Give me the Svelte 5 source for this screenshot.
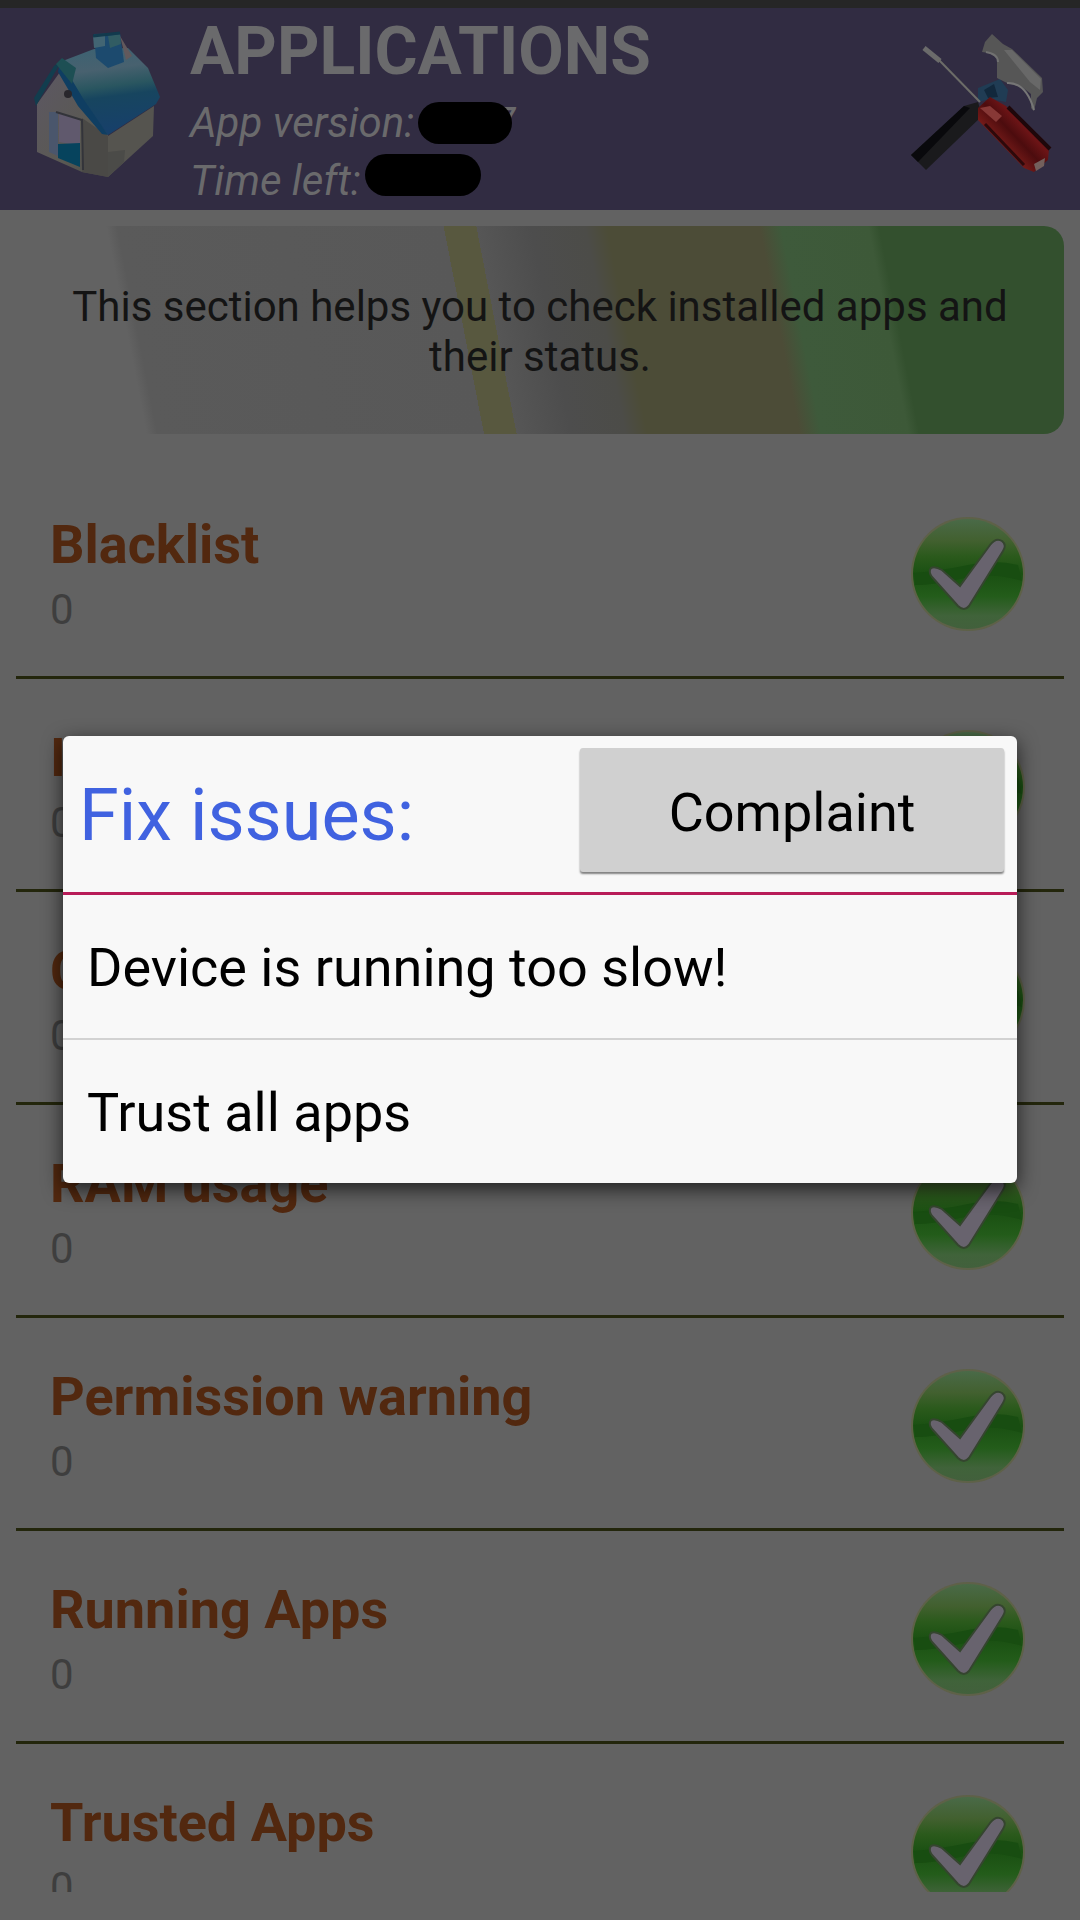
<script>
  const rows = ['Blacklist', 'Issues', 'Cache', 'RAM usage', 'Permission warning', 'Running Apps', 'Trusted Apps'];
  const fixes = ['Device is running too slow!', 'Trust all apps'];
</script>

<svg class="defs" width="0" height="0" aria-hidden="true">
  <defs>
    <linearGradient id="ball" x1="0" y1="0" x2="0" y2="1">
      <stop offset="0" stop-color="#4a6a48" />
      <stop offset="0.2" stop-color="#42602f" />
      <stop offset="0.34" stop-color="#2b5a1c" />
      <stop offset="0.5" stop-color="#1a5012" />
      <stop offset="0.7" stop-color="#235c1a" />
      <stop offset="0.88" stop-color="#40633a" />
      <stop offset="1" stop-color="#42603c" />
    </linearGradient>
    <linearGradient id="roof" x1="0" y1="0" x2="0.15" y2="1">
      <stop offset="0" stop-color="#3b6272" />
      <stop offset="0.3" stop-color="#48616f" />
      <stop offset="0.5" stop-color="#2a5660" />
      <stop offset="0.62" stop-color="#17455f" />
      <stop offset="1" stop-color="#17406a" />
    </linearGradient>
    <linearGradient id="wall" x1="0" y1="0" x2="1" y2="1">
      <stop offset="0" stop-color="#5c5763" />
      <stop offset="0.6" stop-color="#5a5953" />
      <stop offset="1" stop-color="#4a4a47" />
    </linearGradient>
    <linearGradient id="grip" x1="0" y1="1" x2="1" y2="0">
      <stop offset="0" stop-color="#5c1514" />
      <stop offset="0.35" stop-color="#741a18" />
      <stop offset="0.5" stop-color="#4c0c0e" />
      <stop offset="0.62" stop-color="#6c1416" />
      <stop offset="1" stop-color="#3a0c10" />
    </linearGradient>
  </defs>
</svg>

<div class="page">
  <header>
    <button class="icon-button" aria-label="Home">
      <svg width="136" height="176" viewBox="28 12 136 176" aria-hidden="true">
        <path d="M60 72 37 104 37 152 82 172 108 177 108 132Z" fill="url(#wall)" />
        <path d="M108 136 154 106 153 136 108 177Z" fill="#55544f" />
        <path d="M108 152 125 150 124 162 108 177Z" fill="#4b4b48" />
        <path d="M82 118 108 136 108 177 82 172Z" fill="#4a4946" />
        <path d="M49 112 58 112 58 156 49 152Z" fill="#4a566c" />
        <path d="M59 113 80 120 80 146 59 142Z" fill="#60596d" />
        <path d="M58 144 80 143 80 167 58 158Z" fill="#06435d" />
        <path d="M56 112 82 120 83 170" fill="none" stroke="#33343a" stroke-width="2" />
        <path d="M60 62 94 49 128 48 148 68 160 97 156 104 108 135 84 104Z" fill="url(#roof)" />
        <path d="M62 60 36 106 34 98 54 66Z" fill="#123d4e" />
        <path d="M60 60 84 100 108 135 102 134 78 106 58 72Z" fill="#0f3e62" />
        <path d="M56 64 62 58 76 68 72 84Z" fill="#1d4f54" />
        <path d="M94 34 120 33 124 62 108 68 96 58Z" fill="#1c4a6e" />
        <path d="M93 36 105 35 105 46 94 48Z" fill="#426573" />
        <path d="M108 36 120 34 121 44 110 48Z" fill="#315c63" />
        <path d="M93 36 120 33" stroke="#123a4d" stroke-width="3" />
        <path d="M120 36 132 56 126 60Z" fill="#62595c" />
        <circle cx="68" cy="94" r="4" fill="#29272c" />
      </svg>
    </button>
    <div class="heading">
      <h1>APPLICATIONS</h1>
      <p>App version:<span class="redacted short"></span><span class="digit">7</span></p>
      <p>Time left:<span class="redacted long"></span></p>
    </div>
    <button class="icon-button" aria-label="Tools">
      <svg width="144" height="176" viewBox="908 12 144 176" aria-hidden="true">
        <path d="M964 106 978 102 982 116 926 170 911 155Z" fill="#1a1a1c" />
        <path d="M964 106 970 108 918 162 911 155Z" fill="#09090c" />
        <path d="M978 88 1000 79 1008 90 1006 102 990 99 978 102Z" fill="#203c54" />
        <path d="M984 90 994 84 998 97 988 98Z" fill="#12283c" />
        <path d="M992 34 1003 44 1012 49 1042 78 1043 92 1037 98 1034 111 1031 108 1031 94 1022 87 1007 83 997 78 997 58 989 53 982 52 985 42Z" fill="#565656" />
        <path d="M1004 50 1012 50 1041 79 1040 90 1030 82Z" fill="#686868" />
        <path d="M1007 83Q1026 82 1034 110" fill="none" stroke="#767676" stroke-width="2" />
        <path d="M986 52Q998 54 998 62" fill="none" stroke="#717171" stroke-width="2" />
        <path d="M924 48 940 61" stroke="#6b6b6b" stroke-width="5" />
        <path d="M938 59 980 102" stroke="#6c6c68" stroke-width="2" />
        <path d="M978 108 990 97 1006 106 1049 149 1048 160 1034 172 1024 168 978 120Z" fill="url(#grip)" />
        <path d="M1008 107 1050 149" stroke="#1e070a" stroke-width="4" />
        <path d="M985 124 1024 165" stroke="#2d090b" stroke-width="3" />
        <path d="M980 108 990 106 1002 116 996 122Z" fill="#873836" />
        <path d="M1034 164 1045 158 1044 166 1036 171Z" fill="#73605c" />
      </svg>
    </button>
  </header>

  <p class="banner">This section helps you to check installed apps and their status.</p>

  <ul class="list">
    {#each rows as row}
      <li>
        <div>
          <h2>{row}</h2>
          <p>0</p>
        </div>
        <svg width="116" height="124" viewBox="0 0 116 124" aria-hidden="true">
          <circle cx="58" cy="65" r="57" fill="#5e6148" />
          <circle cx="58" cy="65" r="55" fill="url(#ball)" />
          <path d="M4 64Q30 62 58 56 84 50 108 56L112 72Q80 62 50 70 24 76 5 76Z" fill="#184d11" />
          <path
            d="M21 59Q25 57 32 61L50 77 80 36Q86 28 92 32 97 36 93 42L59 97Q54 103 48 97L22 68Q18 63 21 59Z"
            fill="#68636e"
            stroke="#35452f"
            stroke-width="2"
          />
        </svg>
      </li>
    {/each}
  </ul>
</div>

<div class="overlay">
  <div class="dialog" role="dialog" aria-modal="true" aria-labelledby="fix-title">
    <div class="dialog-head">
      <h2 id="fix-title">Fix issues:</h2>
      <button class="complaint">Complaint</button>
    </div>
    {#each fixes as fix}
      <button class="option">{fix}</button>
    {/each}
  </div>
</div>

<style>
  :global(body) {
    margin: 0;
    background: #626262;
    font-family: Roboto, sans-serif;
  }
  .defs {
    position: absolute;
  }
  .page {
    box-sizing: border-box;
    height: 100vh;
    padding-bottom: 28px;
    display: flex;
    flex-direction: column;
    overflow: hidden;
    background: #626262;
  }
  h1, h2, p, ul {
    margin: 0;
    padding: 0;
    font-weight: 400;
  }
  button {
    font-family: inherit;
    border: 0;
    padding: 0;
    background: none;
    text-align: left;
  }
  header {
    display: flex;
    align-items: flex-start;
    gap: 26px;
    padding: 4px 28px 0 28px;
    border-top: 8px solid #262626;
    background: #312c42;
    color: #6a6a6c;
  }
  .icon-button svg {
    display: block;
  }
  .heading {
    flex: 1;
  }
  h1 {
    margin-bottom: 2px;
    font-size: 66px;
    line-height: 80px;
    font-weight: 700;
  }
  .heading p {
    display: flex;
    align-items: center;
    font-size: 42px;
    line-height: 58px;
    font-style: italic;
  }
  .redacted {
    z-index: 1;
    margin-left: 4px;
    height: 42px;
    border-radius: 21px;
    background: #000;
  }
  .short {
    width: 94px;
  }
  .long {
    width: 116px;
    margin-bottom: 12px;
  }
  .digit {
    margin-left: -20px;
  }
  .banner {
    margin: 16px 16px 0;
    padding: 56px 48px 52px;
    border-radius: 20px;
    background: linear-gradient(79deg, #626262 12%, #5a5a5a 13%, #585858 43%, #58583f 43%, #58583f 46%, #565656 46%, #4d4d4d 51%, #4c4c48 56%, #4c4c37 58%, #4c4c37 72%, #3e5a3b 74%, #3d5938 82%, #33502e 83%);
    color: #141414;
    font-size: 42px;
    line-height: 50px;
    text-align: center;
  }
  .list {
    flex: 1;
    min-height: 0;
    margin: 32px 16px 0;
    overflow: hidden;
    list-style: none;
  }
  li {
    display: flex;
    align-items: center;
    justify-content: space-between;
    height: 210px;
    padding: 0 38px 0 34px;
    border-bottom: 3px solid #23260c;
  }
  li div {
    padding-top: 10px;
  }
  li h2 {
    font-size: 54px;
    line-height: 68px;
    font-weight: 700;
    color: #52280f;
  }
  li p {
    font-size: 42px;
    line-height: 62px;
    color: #3e3e3e;
  }
  .overlay {
    position: fixed;
    inset: 0;
    display: flex;
    align-items: center;
    padding: 0 63px 2px;
  }
  .dialog {
    flex: 1;
    border-radius: 6px;
    background: #f8f8f8;
    box-shadow: 0 6px 20px #000000b0;
  }
  .dialog-head {
    display: grid;
    grid-template-columns: 1fr 424px;
    align-items: center;
    padding: 12px 13px 20px 16px;
    border-bottom: 3px solid #b81c58;
  }
  .dialog-head h2 {
    padding-top: 12px;
    font-size: 72px;
    line-height: 84px;
    color: #4062e0;
  }
  .complaint {
    padding-top: 6px;
    height: 124px;
    border-radius: 3px;
    background: #d0d0d0;
    box-shadow: 0 2px 2px #808080;
    font-size: 54px;
    text-align: center;
  }
  .option {
    display: block;
    width: 100%;
    padding: 41px 24px 39px;
    font-size: 54px;
    line-height: 63px;
    color: #000;
  }
  .option + .option {
    border-top: 2px solid #d2d2d2;
  }
</style>
